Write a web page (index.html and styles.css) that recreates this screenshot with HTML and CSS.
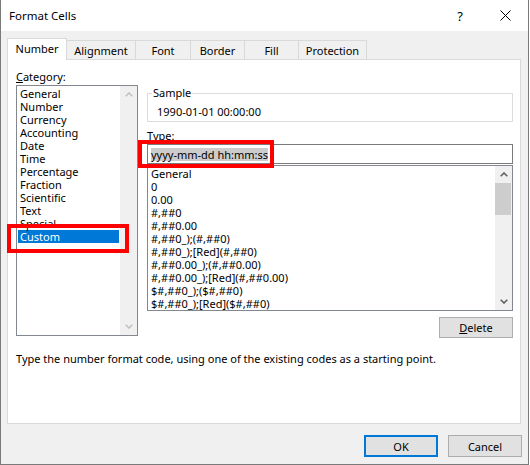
FILE: index.html
```html
<!DOCTYPE html>
<html>
<head>
<meta charset="utf-8">
<link rel="stylesheet" href="styles.css">
</head>
<body>
<div class="window">
  <div class="titlebar">
    <span class="title">Format Cells</span>
    <span class="help">?</span>
    <svg class="close" width="11" height="11" viewBox="0 0 11 11"><path d="M0.5 0.5 L10.5 10.5 M10.5 0.5 L0.5 10.5" stroke="#000" stroke-width="1" fill="none"/></svg>
  </div>
  <div class="body">
    <div class="tabs">
      <div class="tab tab-active">Number</div>
      <div class="tab">Alignment</div>
      <div class="tab">Font</div>
      <div class="tab">Border</div>
      <div class="tab">Fill</div>
      <div class="tab">Protection</div>
    </div>
    <div class="panel">
      <div class="panel-grid">
        <div class="col-left">
          <div class="label cat-label"><u>C</u>ategory:</div>
          <div class="listbox cat-list">
            <ul class="items">
              <li>General</li>
              <li>Number</li>
              <li>Currency</li>
              <li>Accounting</li>
              <li>Date</li>
              <li>Time</li>
              <li>Percentage</li>
              <li>Fraction</li>
              <li>Scientific</li>
              <li>Text</li>
              <li>Special</li>
              <li class="selected">Custom</li>
            </ul>
            <div class="vscroll">
              <div class="sbtn"><svg width="8" height="5" viewBox="0 0 8 5"><polyline points="0.7,4.3 4,1 7.3,4.3" fill="none" stroke="#c2c2c2" stroke-width="1.6"/></svg></div>
              <div class="track"></div>
              <div class="sbtn"><svg width="8" height="5" viewBox="0 0 8 5"><polyline points="0.7,0.7 4,4 7.3,0.7" fill="none" stroke="#c2c2c2" stroke-width="1.6"/></svg></div>
            </div>
          </div>
        </div>
        <div class="col-right">
          <fieldset class="sample">
            <legend>Sample</legend>
            <div class="sample-val">1990-01-01 00:00:00</div>
          </fieldset>
          <div class="label type-label"><u>T</u>ype:</div>
          <div class="input"><span class="sel">yyyy-mm-dd hh:mm:ss</span></div>
          <div class="listbox fmt-list">
            <ul class="items">
              <li>General</li>
              <li>0</li>
              <li>0.00</li>
              <li>#,##0</li>
              <li>#,##0.00</li>
              <li>#,##0_);(#,##0)</li>
              <li>#,##0_);[Red](#,##0)</li>
              <li>#,##0.00_);(#,##0.00)</li>
              <li>#,##0.00_);[Red](#,##0.00)</li>
              <li>$#,##0_);($#,##0)</li>
              <li>$#,##0_);[Red]($#,##0)</li>
            </ul>
            <div class="vscroll">
              <div class="sbtn"><svg width="8" height="5" viewBox="0 0 8 5"><polyline points="0.7,4.3 4,1 7.3,4.3" fill="none" stroke="#606060" stroke-width="1.6"/></svg></div>
              <div class="track"><div class="thumb"></div></div>
              <div class="sbtn"><svg width="8" height="5" viewBox="0 0 8 5"><polyline points="0.7,0.7 4,4 7.3,0.7" fill="none" stroke="#606060" stroke-width="1.6"/></svg></div>
            </div>
          </div>
          <div class="row-end">
            <button class="btn btn-delete"><u>D</u>elete</button>
          </div>
        </div>
      </div>
      <p class="desc">Type the number format code, using one of the existing codes as a starting point.</p>
    </div>
    <div class="footer">
      <button class="btn btn-default">OK</button>
      <button class="btn">Cancel</button>
    </div>
  </div>
  <div class="mark mark-type"></div>
  <div class="mark mark-custom"></div>
</div>
</body>
</html>
```

FILE: styles.css
```css
* { box-sizing: border-box; }
html, body { margin: 0; padding: 0; background: #ffffff; }
body {
  font-family: "Noto Sans", "Open Sans", sans-serif;
  font-size: 11px;
  color: #000;
}
.window {
  position: relative;
  width: 529px;
  height: 465px;
  background: #f0f0f0;
  border-left: 1px solid #7a7a7a;
  border-right: 1px solid #7a7a7a;
  border-bottom: 1px solid #7a7a7a;
}
.titlebar {
  height: 31px;
  background: #fff;
  display: flex;
  align-items: center;
  padding-left: 8px;
}
.title { flex: 1; font-size: 11.5px; }
.help { font-size: 13px; margin-right: 37px; }
.close { margin-right: 17px; }
.body { padding: 7px 0 0 6px; }
.tabs {
  display: flex;
  align-items: flex-end;
  height: 21px;
}
.tab {
  height: 19px;
  border: 1px solid #d9d9d9;
  border-bottom: none;
  margin-left: -1px;
  background: #f0f0f0;
  display: flex;
  align-items: center;
  justify-content: center;
  line-height: 14px;
  padding-top: 1px;
}
.tab:nth-child(1) { width: 60px; margin-left: 0; }
.tab:nth-child(2) { width: 70px; }
.tab:nth-child(3) { width: 56px; }
.tab:nth-child(4) { width: 55px; }
.tab:nth-child(5) { width: 55px; }
.tab:nth-child(6) { width: 69px; }
.tab-active {
  height: 22px;
  margin-bottom: -1px;
  background: #fff;
  position: relative;
  z-index: 1;
  padding-top: 0;
  padding-bottom: 2px;
}
.panel {
  width: 514px;
  height: 365px;
  background: #fff;
  border: 1px solid #d9d9d9;
  padding: 9px 7px 0 8px;
}
.panel-grid {
  display: grid;
  grid-template-columns: 122px 366px;
  column-gap: 9px;
  align-items: start;
}
.label { line-height: 16px; height: 16px; }
.listbox {
  display: flex;
  border: 1px solid #828790;
  background: #fff;
}
.items {
  list-style: none;
  margin: 0;
  padding: 1px 0 0 0;
  flex: 1;
}
.items li {
  height: 13px;
  line-height: 13px;
  white-space: nowrap;
}
.cat-list { height: 251px; }
.cat-list .items li { margin: 0 1px; padding-left: 2px; }
.cat-list .items li.selected { background: #0078d7; color: #fff; }
.vscroll {
  width: 17px;
  background: #f0f0f0;
  display: flex;
  flex-direction: column;
}
.sbtn {
  height: 17px;
  display: flex;
  align-items: center;
  justify-content: center;
}
.track { flex: 1; }
.thumb { width: 16px; height: 32px; background: #cdcdcd; }
.col-right { padding-top: 17px; }
.sample {
  margin: 0;
  padding: 0 0 2px 4px;
  border: 1px solid #dcdcdc;
  min-width: 0;
}
.sample legend {
  padding: 0 1px;
  line-height: 14px;
}
.sample-val {
  margin-top: 4px;
  line-height: 15px;
  padding-left: 5px;
}
.type-label { margin-top: 6px; line-height: 15px; height: 15px; margin-bottom: 1px; }
.input {
  height: 20px;
  border: 1px solid #7a7a7a;
  padding-left: 3px;
  display: flex;
  align-items: center;
}
.sel { background: #cccccc; line-height: 13px; }
.fmt-list { height: 146px; margin-top: 1px; }
.fmt-list .items li { padding-left: 3px; }
.row-end { display: flex; justify-content: flex-end; margin-top: 6px; }
.btn {
  font-family: inherit;
  font-size: 11px;
  color: #000;
  background: #e1e1e1;
  border: 1px solid #adadad;
  height: 21px;
  width: 74px;
  padding: 0;
  margin: 0;
}
.desc { margin: 13px 0 0 0; line-height: 15px; }
.footer {
  display: flex;
  justify-content: flex-end;
  gap: 10px;
  padding-right: 6px;
  margin-top: 11px;
}
.footer .btn { height: 22px; }
.btn-default { border: 2px solid #0078d7; }
.mark {
  position: absolute;
  border: 4px solid #ff0000;
}
.mark-type { left: 137px; top: 140px; width: 136px; height: 28px; }
.mark-custom { left: 6px; top: 224px; width: 122px; height: 29px; }
```
